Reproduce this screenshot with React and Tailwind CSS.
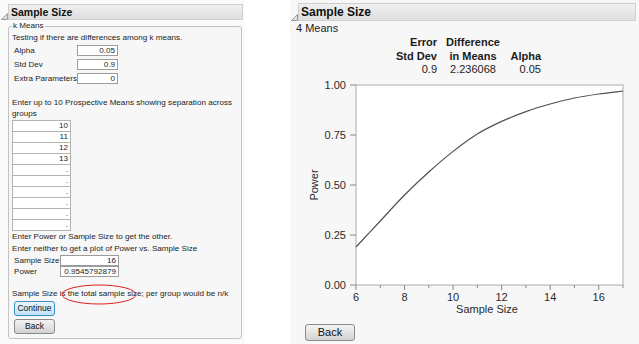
import React from "react";

const powerPts = [
  [6, 0.19], [7, 0.32], [8, 0.45], [9, 0.565], [10, 0.668], [11, 0.755],
  [12, 0.818], [13, 0.867], [14, 0.905], [15, 0.935], [16, 0.955], [17, 0.97],
];

const px = (n) => 66 + (n - 6) * 24.27;
const py = (p) => 208 - p * 200;

const curvePath = () => {
  const pts = powerPts.map(([n, p]) => [px(n), py(p)]);
  let d = `M${pts[0][0]},${pts[0][1]}`;
  for (let i = 0; i < pts.length - 1; i++) {
    const p0 = pts[i - 1] || pts[i];
    const p1 = pts[i];
    const p2 = pts[i + 1];
    const p3 = pts[i + 2] || p2;
    const c1 = [p1[0] + (p2[0] - p0[0]) / 6, p1[1] + (p2[1] - p0[1]) / 6];
    const c2 = [p2[0] - (p3[0] - p1[0]) / 6, p2[1] - (p3[1] - p1[1]) / 6];
    d += ` C${c1[0]},${c1[1]} ${c2[0]},${c2[1]} ${p2[0]},${p2[1]}`;
  }
  return d;
};

const Triangle = () => (
  <svg width="7" height="7" viewBox="0 0 7 7" className="shrink-0">
    <path d="M6.5 0.5 L6.5 6.5 L0.5 6.5 Z" fill="#e0e0e0" stroke="#9a9a9a" strokeWidth="1" />
  </svg>
);

const Field = ({ value, w = "w-[41px]" }) => (
  <div className={`${w} h-[11px] bg-white border border-[#9c9c9c] text-right pr-[2px] leading-[9px]`}>
    {value}
  </div>
);

const means = ["10", "11", "12", "13", ".", ".", ".", ".", ".", "."];

const LeftPanel = () => (
  <div className="w-[245px] h-full bg-[#fafafa] flex flex-col">
    <div className="flex items-end mt-[4px] pl-[1px]">
      <Triangle />
      <div className="w-[235px] h-[16px] bg-gradient-to-b from-[#f0f0f0] to-[#dedede] border border-[#cfcfcf] flex items-center pl-[2px]">
        <span className="text-[10.5px] font-bold text-[#111] leading-none">Sample Size</span>
      </div>
    </div>
    <fieldset className="ml-[8px] w-[234px] mt-[1px] h-[318px] border border-[#c4c4c4] rounded-[3px] bg-[#f7f7f7] px-[3px] text-[8.1px] leading-[10px] text-[#1c1c1c] whitespace-nowrap">
      <legend className="px-[1px] leading-[10px]">k Means</legend>
      <div className="mt-[2px]">Testing if there are differences among k means.</div>
      <div className="mt-[2px] flex flex-col gap-[3px] pl-[2px]">
        {[
          ["Alpha", "0.05"],
          ["Std Dev", "0.9"],
          ["Extra Parameters", "0"],
        ].map(([l, v]) => (
          <div key={l} className="flex items-center h-[11px]">
            <span className="w-[63px]">{l}</span>
            <Field value={v} />
          </div>
        ))}
      </div>
      <div className="mt-[14px]">Enter up to 10 Prospective Means showing separation across</div>
      <div className="leading-[11px]">groups</div>
      <div className="mt-[1px] w-[59px] flex flex-col">
        {means.map((m, i) => (
          <div key={i} className="h-[12px] bg-white border border-[#b3b3b3] -mt-px first:mt-0 text-right pr-[2px] leading-[10px]">
            {m}
          </div>
        ))}
      </div>
      <div className="leading-[12px]">Enter Power or Sample Size to get the other.</div>
      <div className="leading-[12px]">Enter neither to get a plot of Power vs. Sample Size</div>
      <div className="flex flex-col pl-[2px]">
        <div className="flex items-center h-[11px]">
          <span className="w-[46px]">Sample Size</span>
          <Field value="16" w="w-[59px]" />
        </div>
        <div className="flex items-center h-[11px]">
          <span className="w-[46px]">Power</span>
          <Field value="0.9545792879" w="w-[59px]" />
        </div>
      </div>
      <div className="relative mt-[12px]">
        Sample Size is the total sample size; per group would be n/k
        <svg className="absolute left-[49px] top-[-5px]" width="76" height="21" viewBox="0 0 76 21">
          <ellipse cx="38" cy="10.5" rx="37" ry="9.5" fill="none" stroke="#e0201c" strokeWidth="1" />
        </svg>
      </div>
      <button className="mt-[2px] ml-[2px] w-[41px] h-[15px] rounded-[3px] border border-[#3c8fc4] bg-gradient-to-b from-[#e9f6fd] to-[#bde3f8] text-[8.5px] leading-none text-[#111] block">
        Continue
      </button>
      <button className="mt-[3px] ml-[2px] w-[41px] h-[15px] rounded-[3px] border border-[#8a8a8a] bg-gradient-to-b from-[#f4f4f4] to-[#d2d2d2] text-[8.5px] leading-none text-[#111] block">
        Back
      </button>
    </fieldset>
  </div>
);

const Chart = () => {
  const yTicks = [0, 0.25, 0.5, 0.75, 1];
  const xMajor = [6, 8, 10, 12, 14, 16];
  const xMinor = [7, 9, 11, 13, 15, 17];
  return (
    <svg width="349" height="246" viewBox="0 0 349 246" className="block">
      <rect x="66" y="8" width="267" height="200" fill="#ffffff" stroke="#ababab" strokeWidth="1" />
      {yTicks.map((t) => (
        <g key={t}>
          <line x1="60" x2="66" y1={py(t)} y2={py(t)} stroke="#8a8a8a" />
          <text x="56" y={py(t) + 4} textAnchor="end" fontSize="11" fill="#2a2a2a">
            {t.toFixed(2)}
          </text>
        </g>
      ))}
      {xMajor.map((n) => (
        <g key={n}>
          <line x1={px(n)} x2={px(n)} y1="208" y2="213" stroke="#8a8a8a" />
          <text x={px(n)} y="224" textAnchor="middle" fontSize="11" fill="#2a2a2a">
            {n}
          </text>
        </g>
      ))}
      {xMinor.map((n) => (
        <line key={n} x1={px(n)} x2={px(n)} y1="208" y2="211" stroke="#8a8a8a" />
      ))}
      <path d={curvePath()} fill="none" stroke="#505050" strokeWidth="1.2" />
      <text x="197" y="236" textAnchor="middle" fontSize="11" fill="#2a2a2a">
        Sample Size
      </text>
      <text x="0" y="0" transform="translate(28 108) rotate(-90)" textAnchor="middle" fontSize="11" fill="#2a2a2a">
        Power
      </text>
    </svg>
  );
};

const RightPanel = () => (
  <div className="flex-1 h-full bg-[#f7f7f7] flex flex-col text-[11px] text-[#1c1c1c]">
    <div className="flex items-end mt-[3px] pl-[1px]">
      <Triangle />
      <div className="w-[338px] h-[18px] bg-gradient-to-b from-[#f0f0f0] to-[#dedede] border border-[#cfcfcf] flex items-center pl-[2px]">
        <span className="text-[12px] font-bold text-[#111] leading-none">Sample Size</span>
      </div>
    </div>
    <div className="pl-[6px] leading-[15px]">4 Means</div>
    <div className="ml-[100px] flex leading-[13.5px]">
      <div className="w-[47px] text-right">
        <div className="font-bold">Error</div>
        <div className="font-bold">Std Dev</div>
        <div>0.9</div>
      </div>
      <div className="w-[72px] text-center">
        <div className="font-bold">Difference</div>
        <div className="font-bold">in Means</div>
        <div>2.236068</div>
      </div>
      <div className="w-[32px] text-right">
        <div className="font-bold">&nbsp;</div>
        <div className="font-bold">Alpha</div>
        <div>0.05</div>
      </div>
    </div>
    <Chart />
    <button className="ml-[15px] mt-[1px] w-[50px] h-[17px] rounded-[3px] border border-[#8a8a8a] bg-gradient-to-b from-[#f4f4f4] to-[#d2d2d2] text-[11px] leading-none text-[#111]">
      Back
    </button>
  </div>
);

export default function App() {
  return (
    <div
      className="w-[639px] h-[344px] overflow-hidden bg-white flex gap-[45px]"
      style={{ fontFamily: '"Liberation Sans", Arial, sans-serif' }}
    >
      <LeftPanel />
      <RightPanel />
    </div>
  );
}
